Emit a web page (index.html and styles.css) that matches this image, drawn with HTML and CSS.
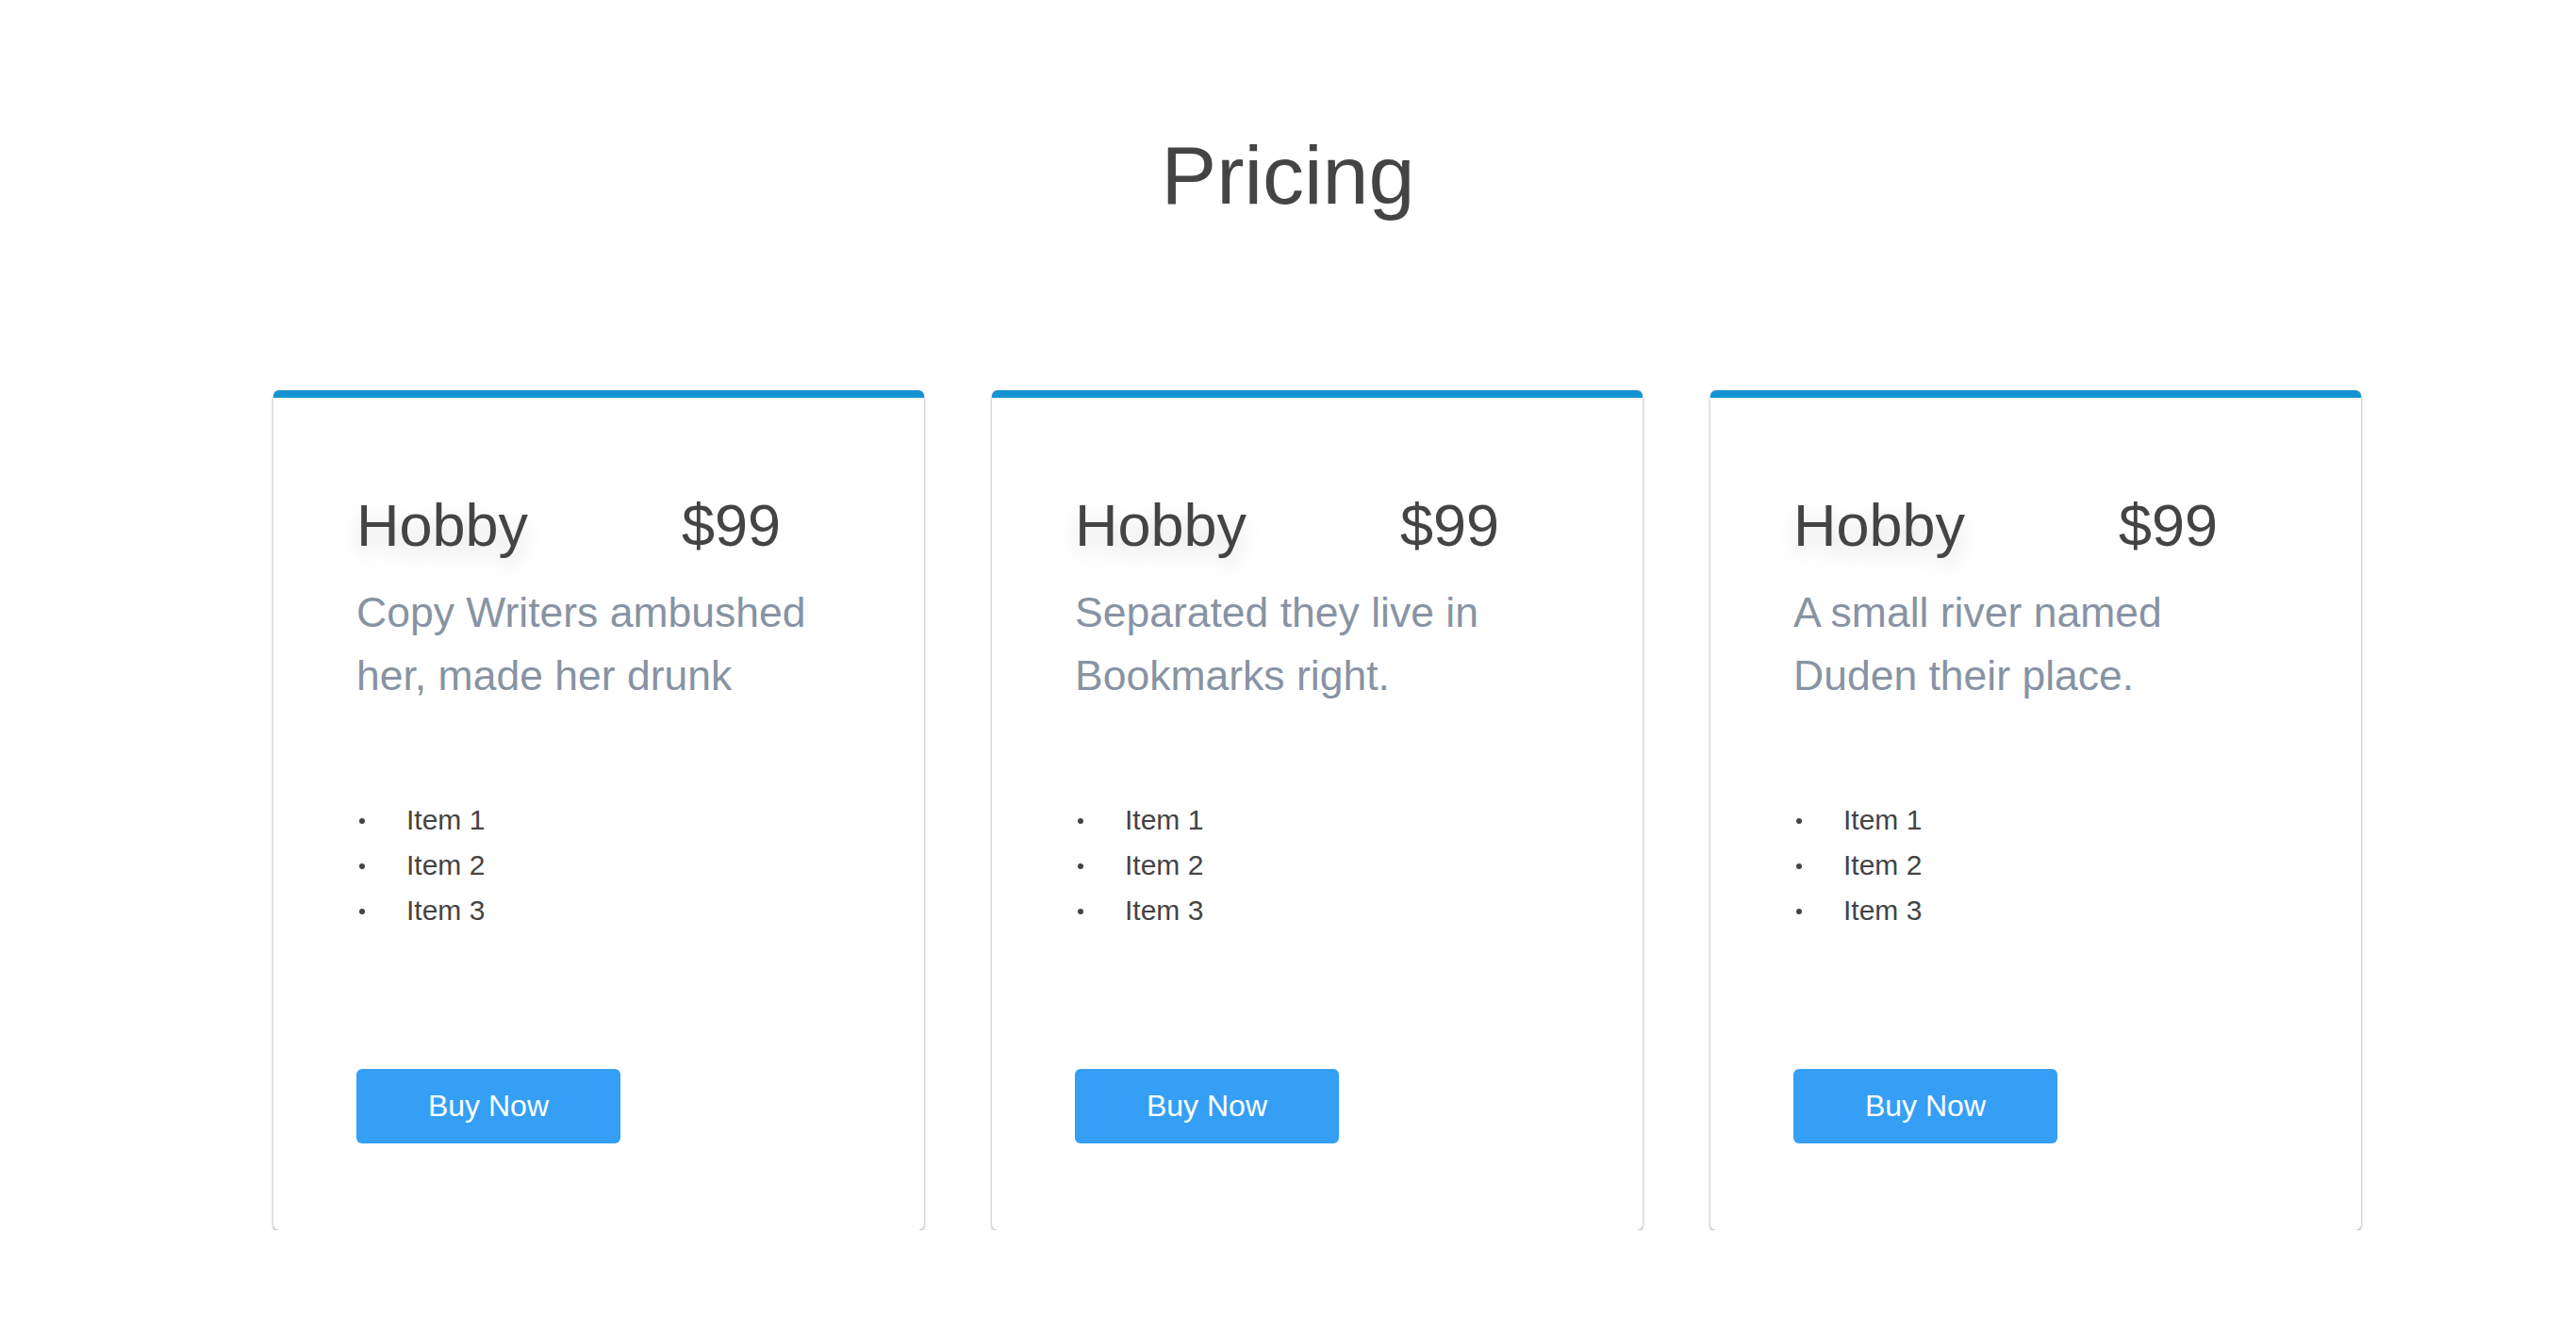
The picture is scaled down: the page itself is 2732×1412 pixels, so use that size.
FILE: index.html
```html
<!DOCTYPE html>
<html lang="en">
<head>
<meta charset="utf-8">
<title>Pricing</title>
<link rel="stylesheet" href="styles.css">
</head>
<body>
<main class="pricing">
  <h1 class="pricing-title">Pricing</h1>
  <div class="plans">
    <section class="plan">
      <div class="plan-head"><span class="plan-name">Hobby</span><span class="plan-price">$99</span></div>
      <p class="plan-desc">Copy Writers ambushed her, made her drunk</p>
      <ul class="plan-items">
        <li>Item 1</li>
        <li>Item 2</li>
        <li>Item 3</li>
      </ul>
      <button class="plan-buy">Buy Now</button>
    </section>
    <section class="plan">
      <div class="plan-head"><span class="plan-name">Hobby</span><span class="plan-price">$99</span></div>
      <p class="plan-desc">Separated they live in Bookmarks right.</p>
      <ul class="plan-items">
        <li>Item 1</li>
        <li>Item 2</li>
        <li>Item 3</li>
      </ul>
      <button class="plan-buy">Buy Now</button>
    </section>
    <section class="plan">
      <div class="plan-head"><span class="plan-name">Hobby</span><span class="plan-price">$99</span></div>
      <p class="plan-desc">A small river named Duden their place.</p>
      <ul class="plan-items">
        <li>Item 1</li>
        <li>Item 2</li>
        <li>Item 3</li>
      </ul>
      <button class="plan-buy">Buy Now</button>
    </section>
  </div>
</main>
</body>
</html>
```

FILE: styles.css
```css
html, body {
  margin: 0;
  padding: 0;
  background: #ffffff;
}

body {
  font-family: "Liberation Sans", Arial, Helvetica, sans-serif;
  color: #444444;
}

.pricing {
  padding-top: 142px;
}

.pricing-title {
  margin: 0;
  font-size: 88px;
  line-height: 88px;
  font-weight: 400;
  text-align: center;
  color: #444444;
}

.plans {
  display: flex;
  justify-content: center;
  gap: 72px;
  margin-top: 184px;
  padding-left: 62px;
}

.plan {
  box-sizing: border-box;
  width: 690px;
  height: 891px;
  padding: 98px 88px 0 88px;
  background: #ffffff;
  border-top: 8px solid #1594d4;
  border-radius: 6px;
  box-shadow: 0 3px 4px -1px rgba(0, 0, 0, 0.38), 0 0 2px rgba(0, 0, 0, 0.25);
  display: flex;
  flex-direction: column;
  align-items: flex-start;
}

.plan-head {
  display: flex;
  align-items: baseline;
  font-size: 63px;
  line-height: 74px;
  color: #444444;
}

.plan-name {
  width: 345px;
  text-shadow: 0 10px 22px rgba(0, 0, 0, 0.14);
}

.plan-price {
  white-space: nowrap;
}

.plan-desc {
  margin: 22px 0 0 0;
  font-size: 44.5px;
  line-height: 67px;
  color: #8893a3;
}

.plan-items {
  list-style: none;
  margin: 96px 0 0 0;
  padding: 0;
  font-size: 30px;
  line-height: 48px;
  color: #444444;
}

.plan-items li::before {
  content: "";
  display: inline-block;
  width: 6px;
  height: 6px;
  border-radius: 50%;
  background: #444444;
  margin-left: 3px;
  margin-right: 44px;
  vertical-align: 6px;
}

.plan-buy {
  margin-top: 144px;
  width: 280px;
  height: 79px;
  border: none;
  border-radius: 6px;
  background: #349ff4;
  color: #ffffff;
  font-family: "Liberation Sans", Arial, Helvetica, sans-serif;
  font-size: 32px;
  padding: 0;
  cursor: pointer;
}
```
